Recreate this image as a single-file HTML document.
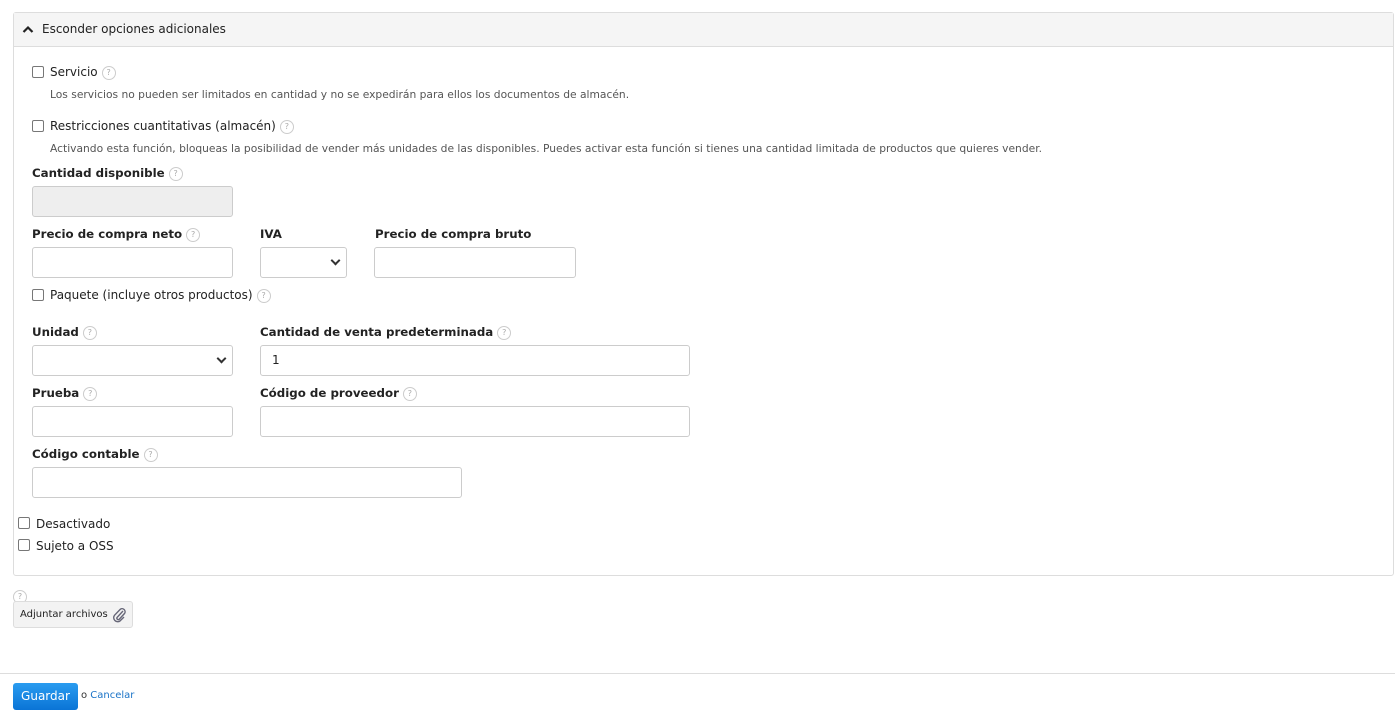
<!DOCTYPE html>
<html><head><meta charset="utf-8"><style>
body{margin:0;width:1395px;height:712px;background:#fff;font-family:"DejaVu Sans",Verdana,sans-serif;color:#222;position:relative;overflow:hidden}
.a{position:absolute;white-space:nowrap}
.panel{position:absolute;left:13px;top:12px;width:1379px;height:562px;border:1px solid #ddd;border-radius:3px}
.hdr{position:absolute;left:0;top:0;right:0;height:33px;background:#f5f5f5;border-bottom:1px solid #ddd}
.t{font-size:12px}
.d{font-size:10.7px;color:#555}
.b{font-size:11.8px;font-weight:bold}
.cb{position:absolute;width:10px;height:10px;border:1px solid #777;border-radius:2px;background:#fff}
.q{display:inline-block;width:12px;height:12px;border:1px solid #ccc;border-radius:50%;font-size:8px;color:#aaa;text-align:center;line-height:12px;vertical-align:middle;margin-left:4px;font-weight:normal}
.in{position:absolute;height:29px;border:1px solid #ccc;border-radius:3px;background:#fff;box-sizing:border-box}
.sel::after{content:"";position:absolute;right:7px;top:9px;width:5px;height:5px;border-right:2px solid #333;border-bottom:2px solid #333;transform:rotate(45deg)}
</style></head><body>
<div class="panel"><div class="hdr"></div></div>
<svg class="a" style="left:22px;top:25px" width="12" height="9"><path d="M1.5 7 L6 2.5 L10.5 7" stroke="#222" stroke-width="2.2" fill="none"/></svg>
<div class="a t" style="left:42px;top:22px">Esconder opciones adicionales</div>

<div class="cb" style="left:32px;top:66px"></div>
<div class="a t" style="left:50px;top:65px">Servicio<span class="q">?</span></div>
<div class="a d" style="left:50px;top:88px">Los servicios no pueden ser limitados en cantidad y no se expedirán para ellos los documentos de almacén.</div>

<div class="cb" style="left:32px;top:120px"></div>
<div class="a t" style="left:50px;top:119px">Restricciones cuantitativas (almacén)<span class="q">?</span></div>
<div class="a d" style="left:50px;top:142px">Activando esta función, bloqueas la posibilidad de vender más unidades de las disponibles. Puedes activar esta función si tienes una cantidad limitada de productos que quieres vender.</div>

<div class="a b" style="left:32px;top:166px">Cantidad disponible<span class="q">?</span></div>
<div class="in" style="left:32px;top:186px;width:201px;height:31px;background:#eee"></div>

<div class="a b" style="left:32px;top:227px">Precio de compra neto<span class="q">?</span></div>
<div class="a b" style="left:260px;top:227px">IVA</div>
<div class="a b" style="left:375px;top:227px">Precio de compra bruto</div>
<div class="in" style="left:32px;top:247px;width:201px;height:31px"></div>
<div class="in sel" style="left:260px;top:247px;width:87px;height:31px"></div>
<div class="in" style="left:374px;top:247px;width:202px;height:31px"></div>

<div class="cb" style="left:32px;top:289px"></div>
<div class="a t" style="left:50px;top:288px">Paquete (incluye otros productos)<span class="q">?</span></div>

<div class="a b" style="left:32px;top:325px">Unidad<span class="q">?</span></div>
<div class="a b" style="left:260px;top:325px">Cantidad de venta predeterminada<span class="q">?</span></div>
<div class="in sel" style="left:32px;top:345px;width:201px;height:31px"></div>
<div class="in" style="left:260px;top:345px;width:430px;height:31px"></div>
<div class="a t" style="left:272px;top:353px">1</div>

<div class="a b" style="left:32px;top:386px">Prueba<span class="q">?</span></div>
<div class="a b" style="left:260px;top:386px">Código de proveedor<span class="q">?</span></div>
<div class="in" style="left:32px;top:406px;width:201px;height:31px"></div>
<div class="in" style="left:260px;top:406px;width:430px;height:31px"></div>

<div class="a b" style="left:32px;top:447px">Código contable<span class="q">?</span></div>
<div class="in" style="left:32px;top:467px;width:430px;height:31px"></div>

<div class="cb" style="left:18px;top:517px"></div>
<div class="a t" style="left:36px;top:517px">Desactivado</div>
<div class="cb" style="left:18px;top:539px"></div>
<div class="a t" style="left:36px;top:539px">Sujeto a OSS</div>

<div class="a" style="left:13px;top:586px"><span class="q" style="margin:0">?</span></div>
<div class="a" style="left:13px;top:601px;height:27px;border:1px solid #ddd;border-radius:3px;background:#f3f3f3;font-size:10px;line-height:25px;padding-left:6px;box-sizing:border-box;width:120px">Adjuntar archivos
<svg style="position:absolute;left:97px;top:5px" width="16" height="16" viewBox="0 0 16 16"><path d="M12 4 L6 10.5 a1.5 1.5 0 0 0 2 2 L13.5 6.5 a3 3 0 0 0 -4.2 -4.2 L3.5 8.3 a4 4 0 0 0 5.6 5.6 L13 10" stroke="#667" stroke-width="1.4" fill="none"/></svg></div>

<div class="a" style="left:0;top:673px;width:1395px;height:1px;background:#ddd"></div>
<div class="a" style="left:13px;top:683px;width:65px;height:27px;border-radius:3px;background:linear-gradient(#2a9cf0,#0a74d6);color:#fff;font-size:12px;line-height:27px;text-align:center">Guardar</div>
<div class="a" style="left:81px;top:690px;font-size:10px;color:#333">o <span style="color:#1a73c7">Cancelar</span></div>
</body></html>
